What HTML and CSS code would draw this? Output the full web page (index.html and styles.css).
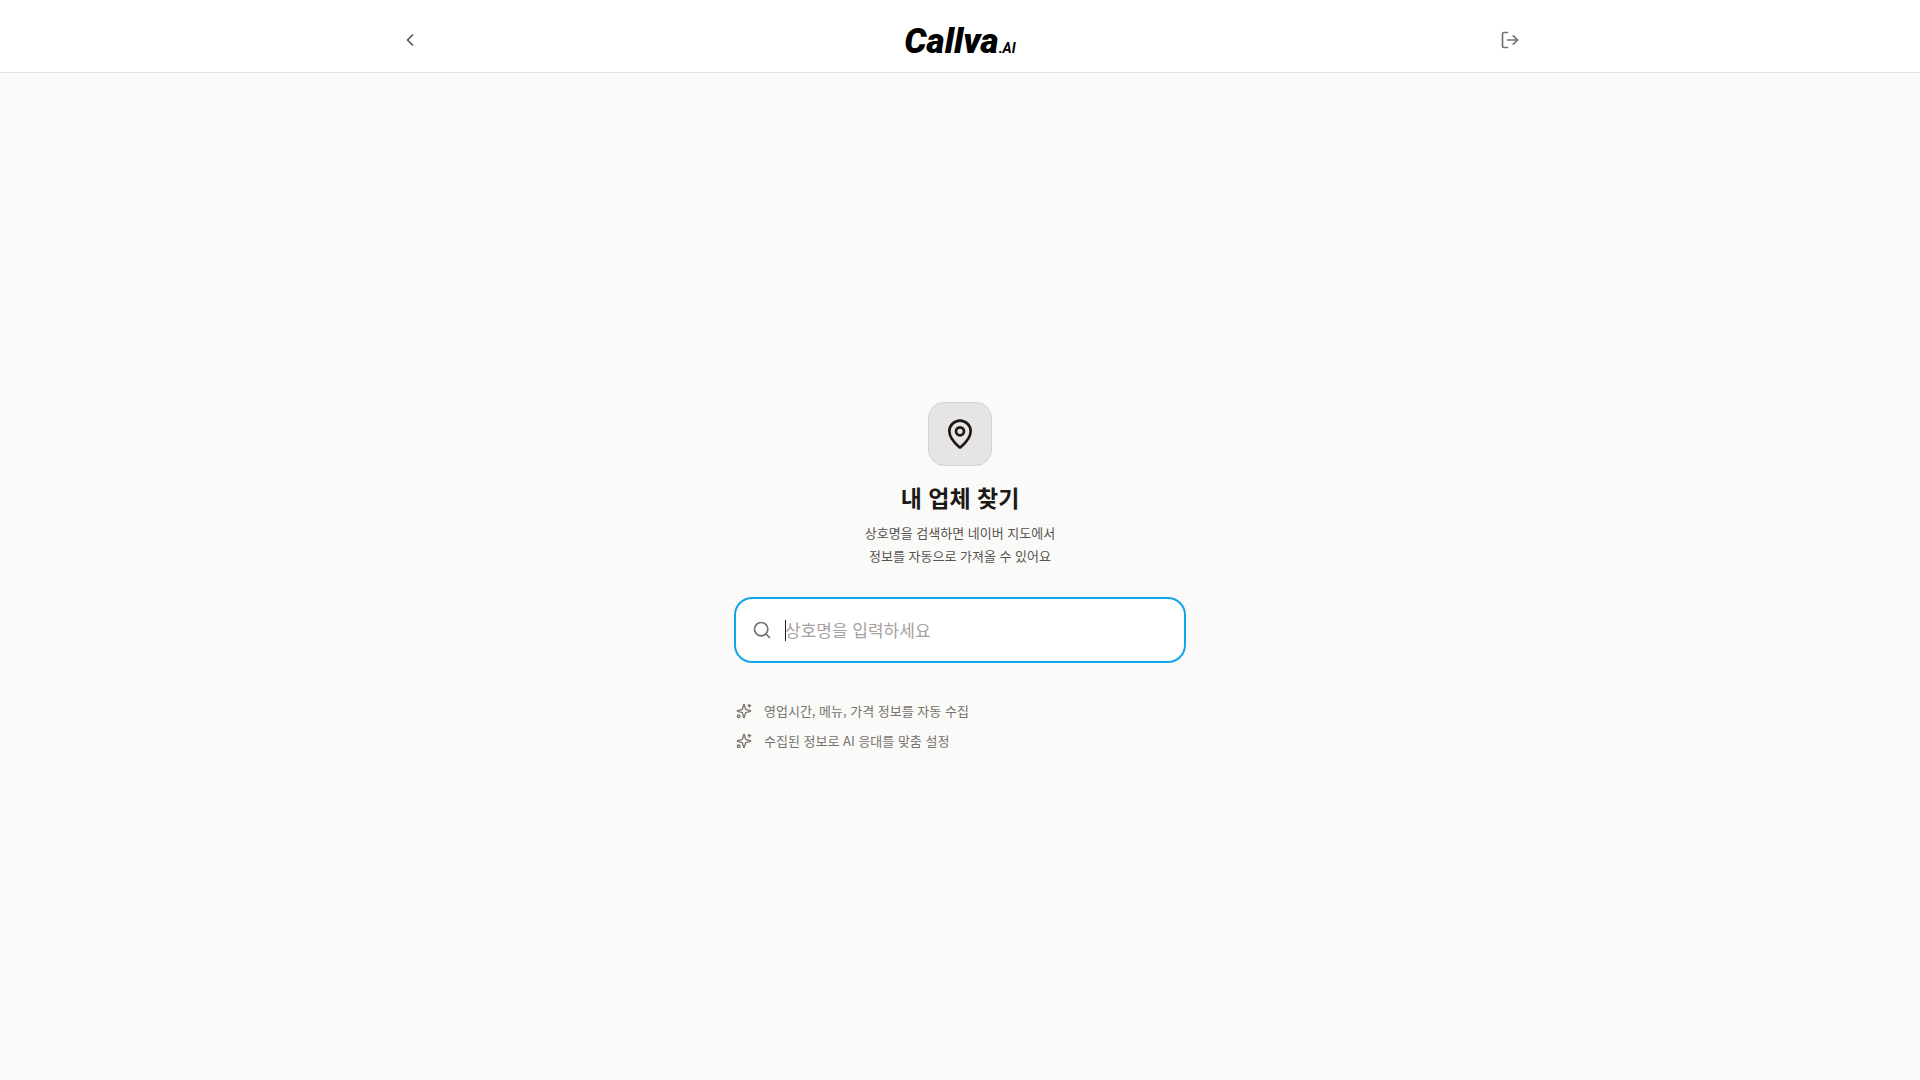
FILE: index.html
```html
<!DOCTYPE html>
<html lang="ko">
<head>
  <meta charset="UTF-8">
  <meta name="viewport" content="width=device-width, initial-scale=1.0">
  <title>내 업체 찾기 - Callva.AI</title>
  <link rel="stylesheet" href="styles.css">
</head>
<body>
  <header class="header">
    <div class="header-inner">
      <button class="icon-btn icon-btn-back" type="button" aria-label="뒤로">
        <svg class="icon" viewBox="0 0 24 24"><path d="m15 18-6-6 6-6"/></svg>
      </button>
      <a class="logo" href="#">Callva<span class="logo-ai">.AI</span></a>
      <button class="icon-btn" type="button" aria-label="로그아웃">
        <svg class="icon" viewBox="0 0 24 24"><path d="m16 17 5-5-5-5"/><path d="M21 12H9"/><path d="M9 21H5a2 2 0 0 1-2-2V5a2 2 0 0 1 2-2h4"/></svg>
      </button>
    </div>
  </header>

  <main class="main">
    <div class="panel">
      <!-- 안내 -->
      <div class="intro">
        <div class="badge">
          <svg class="icon icon-pin" viewBox="0 0 24 24"><path d="M20 10c0 4.993-5.539 10.193-7.399 11.799a1 1 0 0 1-1.202 0C9.539 20.193 4 14.993 4 10a8 8 0 0 1 16 0"/><circle cx="12" cy="10" r="3"/></svg>
        </div>
        <h1>내 업체 찾기</h1>
        <p>상호명을 검색하면 네이버 지도에서<br>정보를 자동으로 가져올 수 있어요</p>
      </div>

      <!-- 검색 -->
      <label class="search">
        <svg class="icon" viewBox="0 0 24 24"><circle cx="11" cy="11" r="8"/><path d="m21 21-4.3-4.3"/></svg>
        <span class="field">
          <input type="text" placeholder="상호명을 입력하세요" aria-label="상호명" autofocus>
        </span>
      </label>

      <ul class="features">
        <li>
          <svg class="icon icon-sm" viewBox="0 0 24 24"><path d="M9.937 15.5A2 2 0 0 0 8.5 14.063l-6.135-1.582a.5.5 0 0 1 0-.962L8.5 9.936A2 2 0 0 0 9.937 8.5l1.582-6.135a.5.5 0 0 1 .963 0L14.063 8.5A2 2 0 0 0 15.5 9.937l6.135 1.581a.5.5 0 0 1 0 .964L15.5 14.063a2 2 0 0 0-1.437 1.437l-1.582 6.135a.5.5 0 0 1-.963 0z"/><path d="M20 2v4"/><path d="M22 4h-4"/><circle cx="4" cy="20" r="2"/></svg>
          영업시간, 메뉴, 가격 정보를 자동 수집
        </li>
        <li>
          <svg class="icon icon-sm" viewBox="0 0 24 24"><path d="M9.937 15.5A2 2 0 0 0 8.5 14.063l-6.135-1.582a.5.5 0 0 1 0-.962L8.5 9.936A2 2 0 0 0 9.937 8.5l1.582-6.135a.5.5 0 0 1 .963 0L14.063 8.5A2 2 0 0 0 15.5 9.937l6.135 1.581a.5.5 0 0 1 0 .964L15.5 14.063a2 2 0 0 0-1.437 1.437l-1.582 6.135a.5.5 0 0 1-.963 0z"/><path d="M20 2v4"/><path d="M22 4h-4"/><circle cx="4" cy="20" r="2"/></svg>
          수집된 정보로 AI 응대를 맞춤 설정
        </li>
      </ul>
    </div>
  </main>
</body>
</html>
```
FILE: styles.css
```css
* { box-sizing: border-box; }
body { margin: 0; min-height: 100vh; display: flex; flex-direction: column; font-family: "Noto Sans CJK KR", sans-serif; background: #fafaf9; color: #1c1917; }

.header { background: #fff; border-bottom: 1px solid #e7e5e4; }
.header-inner { max-width: 1140px; margin: 0 auto; padding: 18px 0 10px; display: flex; align-items: center; justify-content: space-between; }
.icon-btn { display: flex; align-items: center; justify-content: center; width: 40px; height: 40px; padding: 0; border: 0; background: none; color: #78716c; cursor: pointer; }
.icon-btn-back { color: #57534e; }
.logo { padding-top: 4px; font: italic 900 35px/40px Roboto, sans-serif; color: #000; text-decoration: none; }
.logo-ai { font-size: 14px; line-height: 14px; font-weight: 700; }

.icon { flex: none; width: 20px; height: 20px; fill: none; stroke: currentColor; stroke-width: 2; stroke-linecap: round; stroke-linejoin: round; }
.icon-pin { width: 32px; height: 32px; }
.icon-sm { width: 16px; height: 16px; }

.main { flex: 1; display: flex; align-items: center; justify-content: center; padding: 16px; }
.panel { width: 100%; max-width: 448px; }

.intro { text-align: center; margin-bottom: 32px; }
.badge { display: flex; align-items: center; justify-content: center; width: 64px; height: 64px; margin: 0 auto 16px; border: 1px solid #d6d3d1; border-radius: 16px; background: #e7e5e4; }
h1 { margin: 0 0 8px; font-size: 23px; line-height: 31px; font-weight: 700; }
.intro p { margin: 0; font-size: 13px; line-height: 23px; color: #57534e; }

.search { display: flex; align-items: center; gap: 13px; height: 62px; padding: 0 16px; border-radius: 16px; background: #fff; box-shadow: 0 0 0 2px #0ea5e9; color: #78716c; }
.field { position: relative; flex: 1; display: flex; }
.field input { flex: 1; min-width: 0; padding: 0; border: 0; outline: 0; background: none; font: inherit; font-size: 17px; line-height: 28px; color: #1c1917; caret-color: transparent; }
.field input::placeholder { color: #a8a29e; opacity: 1; }
/* steady text cursor */
.field::before { content: ""; position: absolute; left: 0; top: 4px; width: 1px; height: 21px; background: #1c1917; }

.features { list-style: none; margin: 40px 0 0; padding: 0; display: flex; flex-direction: column; gap: 10px; }
.features li { display: flex; align-items: center; gap: 12px; font-size: 13px; line-height: 20px; color: #78716c; }
```
